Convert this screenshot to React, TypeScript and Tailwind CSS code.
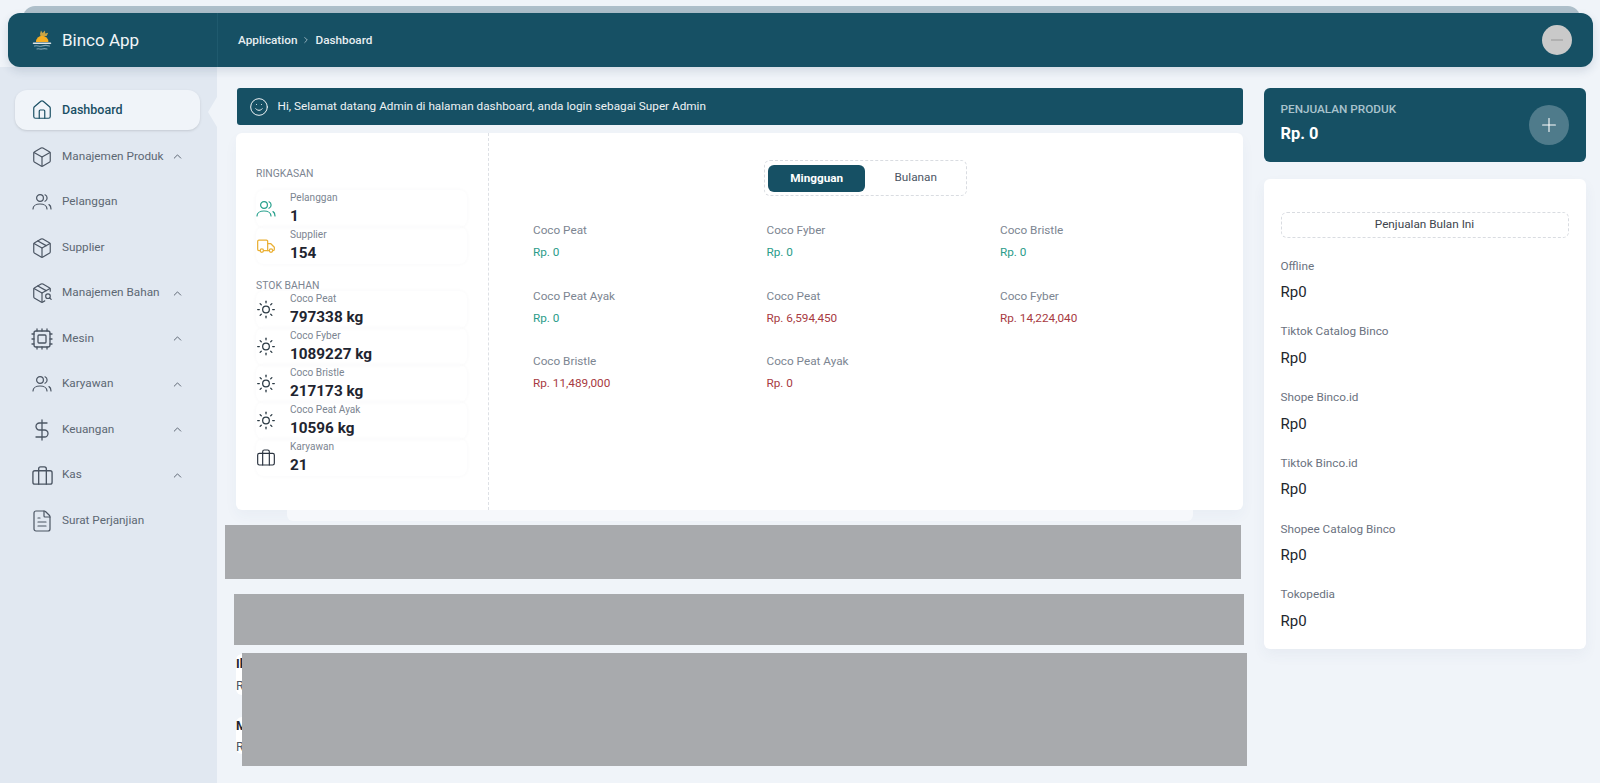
import { Box, ChevronRight, ChevronUp, Cpu, DollarSign, FileText, House, Package, PackageSearch, Plus, Smile, Sun } from 'lucide-react';
import type { ReactNode } from 'react';

function PeopleIcon({ className }: { className?: string }) {
  return (
    <svg className={className} viewBox="0 0 20 20" fill="none" stroke="currentColor" strokeWidth={1.2} strokeLinecap="round" strokeLinejoin="round">
      <circle cx="8" cy="6" r="3.4" />
      <path d="M1 17c0-3 3-5 7-5s7 2 7 5" />
      <path d="M13 2.8c1.5.6 2.1 2 2.1 3.3s-.6 2.6-2.1 3.2" />
      <path d="M17 12.6c1.3.7 2 2.1 2 4.4" />
    </svg>
  );
}

function CaseIcon({ className }: { className?: string }) {
  return (
    <svg className={className} viewBox="0 0 24 24" fill="none" stroke="currentColor" strokeWidth={1.4} strokeLinecap="round" strokeLinejoin="round">
      <rect x="2" y="7" width="20" height="14" rx="2" />
      <path d="M16 21V5a2 2 0 0 0-2-2h-4a2 2 0 0 0-2 2v16" />
    </svg>
  );
}

function TruckIcon({ className }: { className?: string }) {
  return (
    <svg className={className} viewBox="0 0 24 24" fill="none" stroke="currentColor" strokeWidth={1.5} strokeLinecap="round" strokeLinejoin="round">
      <path d="M5 17.5H3.5A1.5 1.5 0 0 1 2 16V6.5A1.5 1.5 0 0 1 3.5 5h9A1.5 1.5 0 0 1 14 6.5v11H9" />
      <path d="M14 9h3.5l4.5 4.5v2.5a1.5 1.5 0 0 1-1.5 1.5H20M16 17.5h-2" />
      <circle cx="7" cy="17.5" r="2" />
      <circle cx="18" cy="17.5" r="2" />
    </svg>
  );
}

function Logo() {
  return (
    <svg className="h-[22px] w-[22px]" viewBox="0 0 22 22" fill="none">
      <path d="M9 5l1-3.5 1.6 2.4L14 1.5l.2 3 3-.8-1.6 3.4H9.5z" fill="#c9a445" />
      <path d="M5 13a6.2 6.2 0 0 1 12.4 0z" fill="#f6ae22" />
      <path d="M2.5 14.2h17" stroke="#dfe6e9" strokeWidth="1.5" strokeLinecap="round" />
      <path d="M3.5 17c2.5-1 5 .8 7.5 0s5-.8 7.5 0M6 20c1.8-.7 3.3.5 5 0s3.2-.5 5 0" stroke="#7fa3b3" strokeWidth="1.1" strokeLinecap="round" />
    </svg>
  );
}

const navItems: { label: string; icon: ReactNode; sub?: boolean }[] = [
  { label: 'Manajemen Produk', icon: <Box className="h-[22px] w-[22px]" strokeWidth={1.3} />, sub: true },
  { label: 'Pelanggan', icon: <PeopleIcon className="h-[20px] w-[20px]" /> },
  { label: 'Supplier', icon: <Package className="h-[22px] w-[22px]" strokeWidth={1.3} /> },
  { label: 'Manajemen Bahan', icon: <PackageSearch className="h-[22px] w-[22px]" strokeWidth={1.3} />, sub: true },
  { label: 'Mesin', icon: <Cpu className="h-[24px] w-[24px]" strokeWidth={1.3} />, sub: true },
  { label: 'Karyawan', icon: <PeopleIcon className="h-[20px] w-[20px]" />, sub: true },
  { label: 'Keuangan', icon: <DollarSign className="h-[24px] w-[24px]" strokeWidth={1.3} />, sub: true },
  { label: 'Kas', icon: <CaseIcon className="h-[23px] w-[23px]" />, sub: true },
  { label: 'Surat Perjanjian', icon: <FileText className="h-[24px] w-[24px]" strokeWidth={1.2} /> },
];

function Sidebar() {
  return (
    <aside className="relative w-[217px] shrink-0 bg-[#e1e8f1] pl-[15px] pr-[17px] pt-[23px] text-[#5c6773]">
      <div className="flex h-10 items-center rounded-xl bg-[#f0f4f9] pl-[16px] text-[#1a4f64] shadow-sm">
        <House className="h-[22px] w-[22px] shrink-0" strokeWidth={1.3} />
        <span className="ml-[9px] pt-px text-[12.5px] font-medium">Dashboard</span>
      </div>
      <div className="absolute right-0 top-[30px] h-[30px] w-[9px] bg-[#f0f4f9] [clip-path:polygon(100%_0,0_50%,100%_100%)]" />
      <nav className="mt-[4px]">
        {navItems.map((item) => (
          <div key={item.label} className="flex h-[45.5px] items-center">
            <span className="flex w-[47px] shrink-0 justify-center pl-[7px] text-[#4b5563]">{item.icon}</span>
            <span className="text-[11.76px] whitespace-nowrap">{item.label}</span>
            {item.sub && <ChevronUp className="ml-auto mr-[16px] h-[13px] w-[13px] text-[#4b5563]" strokeWidth={1.6} />}
          </div>
        ))}
      </nav>
    </aside>
  );
}

function StatRow({ icon, label, value }: { icon: ReactNode; label: string; value: string }) {
  return (
    <div className="flex h-[37px] items-center rounded-lg shadow-[0_0_4px_rgba(30,50,80,0.035)]">
      <span className="flex w-[20px] shrink-0 justify-center">{icon}</span>
      <div className="ml-[14px]">
        <div className="text-[10.1px] leading-[13px] text-[#7c8591]">{label}</div>
        <div className="mt-[2px] text-[15.3px] font-bold leading-[21px] text-[#1f2530]">{value}</div>
      </div>
    </div>
  );
}

const sunIcon = <Sun className="h-[21px] w-[21px] text-[#2b3a44]" strokeWidth={1.5} />;

const sales = [
  { label: 'Coco Peat', value: 'Rp. 0', tone: 'text-[#2a9c8a]' },
  { label: 'Coco Fyber', value: 'Rp. 0', tone: 'text-[#2a9c8a]' },
  { label: 'Coco Bristle', value: 'Rp. 0', tone: 'text-[#2a9c8a]' },
  { label: 'Coco Peat Ayak', value: 'Rp. 0', tone: 'text-[#2a9c8a]' },
  { label: 'Coco Peat', value: 'Rp. 6,594,450', tone: 'text-[#a83a42]' },
  { label: 'Coco Fyber', value: 'Rp. 14,224,040', tone: 'text-[#a83a42]' },
  { label: 'Coco Bristle', value: 'Rp. 11,489,000', tone: 'text-[#a83a42]' },
  { label: 'Coco Peat Ayak', value: 'Rp. 0', tone: 'text-[#a83a42]' },
];

const channels = ['Offline', 'Tiktok Catalog Binco', 'Shope Binco.id', 'Tiktok Binco.id', 'Shopee Catalog Binco', 'Tokopedia'];

export default function App() {
  return (
    <div className="relative h-[783px] overflow-hidden bg-[#f0f4f9] font-['Roboto',sans-serif]">
      <div className="absolute left-[23px] right-[20px] top-[6px] h-[14px] rounded-t-xl bg-[#aebfca]" />
      <div className="pl-2 pr-[7px] pt-[13px]">
        <header className="relative z-10 flex h-[54px] items-center rounded-xl bg-[#165064] text-white shadow-[0_4px_10px_rgba(30,60,90,0.14)]">
          <div className="flex h-full w-[210px] shrink-0 items-center border-r border-[#1f5a6e] pl-[23px]">
            <Logo />
            <span className="ml-[9px] pt-px text-[17px] text-[#f1f5f7]">Binco App</span>
          </div>
          <div className="ml-[20px] flex items-center pt-px text-[11.76px] font-medium text-[#e6eef1]">
            <span>Application</span>
            <ChevronRight className="mx-[4px] h-[10px] w-[10px] text-[#a9c1cb]" />
            <span>Dashboard</span>
          </div>
          <div className="ml-auto mr-[21px] flex h-[30px] w-[30px] items-center justify-center rounded-full bg-[#c9c9c9]">
            <span className="h-[2px] w-[12px] bg-[#b0b0b0]" />
          </div>
        </header>
      </div>

      <div className="flex h-[716px]">
        <Sidebar />

        <main className="flex min-w-0 flex-1 pl-[20px] pr-[14.5px] pt-[21px]">
          <div className="w-[1005.5px] shrink-0">
            <div className="flex h-[37px] items-center rounded-[3px] bg-[#165064] pl-[12px] text-[11.76px] text-[#eef3f5]">
              <Smile className="h-[20px] w-[20px]" strokeWidth={1.2} />
              <span className="ml-[8.5px] pt-px">Hi, Selamat datang Admin di halaman dashboard, anda login sebagai Super Admin</span>
            </div>

            <section className="-ml-px mt-2 flex h-[377px] rounded-md bg-white shadow-[0_6px_14px_rgba(60,80,120,0.04)]">
              <div className="w-[253px] shrink-0 border-r border-dashed border-[#dde0e5] pl-[20px] pr-[21px] pt-[34px]">
                <div className="text-[10.4px] leading-[13px] text-[#7c8591]">RINGKASAN</div>
                <div className="mt-[10px]">
                  <StatRow icon={<PeopleIcon className="h-[20px] w-[20px] text-[#26a08c]" />} label="Pelanggan" value="1" />
                  <StatRow icon={<TruckIcon className="h-[22px] w-[22px] text-[#eab035]" />} label="Supplier" value="154" />
                </div>
                <div className="mt-[15px] text-[10.4px] leading-[13px] text-[#7c8591]">STOK BAHAN</div>
                <div className="-mt-px">
                  <StatRow icon={sunIcon} label="Coco Peat" value="797338 kg" />
                  <StatRow icon={sunIcon} label="Coco Fyber" value="1089227 kg" />
                  <StatRow icon={sunIcon} label="Coco Bristle" value="217173 kg" />
                  <StatRow icon={sunIcon} label="Coco Peat Ayak" value="10596 kg" />
                  <StatRow icon={<CaseIcon className="h-[21px] w-[21px] text-[#2b3440]" />} label="Karyawan" value="21" />
                </div>
              </div>

              <div className="min-w-0 flex-1 pt-[27px]">
                <div className="mx-auto flex h-[36px] w-[203px] items-center rounded-md border border-dashed border-[#d9dce1] pl-[3px]">
                  <div className="flex h-[27px] w-[97px] items-center justify-center rounded-md bg-[#165064] pt-px text-[11.76px] font-bold text-white">Mingguan</div>
                  <div className="flex-1 text-center text-[11.76px] text-[#4b5563]">Bulanan</div>
                </div>
                <div className="mt-[26px] grid grid-cols-[repeat(3,233.5px)] gap-y-[27.6px] pl-[44px]">
                  {sales.map((s, i) => (
                    <div key={i} className="h-[38px]">
                      <div className="text-[11.76px] leading-[17px] text-[#7c8591]">{s.label}</div>
                      <div className={`mt-[5px] text-[11.76px] leading-[16px] ${s.tone}`}>{s.value}</div>
                    </div>
                  ))}
                </div>
              </div>
            </section>
            <div className="mx-[50px] h-[11px] rounded-b-md bg-[#f6f8fb]" />

            <section className="-ml-px mt-[133px] w-[30px] text-[12.5px]">
              <div className="h-[41px] rounded-l-md bg-white pt-px">
                <div className="font-bold leading-[17px] text-[#1f2530]">Ik</div>
                <div className="mt-[5px] leading-[17px] text-[#4b5563]">Rp</div>
              </div>
              <div className="mt-[21.5px] h-[37px] rounded-l-md bg-white">
                <div className="font-bold leading-[17px] text-[#1f2530]">Mu</div>
                <div className="mt-[4px] leading-[17px] text-[#4b5563]">Rp</div>
              </div>
            </section>
          </div>

          <div className="ml-[21px] min-w-0 flex-1">
            <div className="flex h-[74px] items-center justify-between rounded-md bg-[#165064] pl-[17px] pr-[17px]">
              <div className="pb-[3px]">
                <div className="text-[11.76px] font-medium text-[#a9c3cd]">PENJUALAN PRODUK</div>
                <div className="mt-[3px] text-[16.4px] font-bold text-white">Rp. 0</div>
              </div>
              <div className="flex h-10 w-10 items-center justify-center rounded-full bg-[#4f7b8b]">
                <Plus className="h-[22px] w-[22px] text-white" strokeWidth={1.2} />
              </div>
            </div>

            <div className="mt-[17px] h-[470px] rounded-md bg-white px-[17px] pt-[33px] shadow-[0_6px_14px_rgba(60,80,120,0.05)]">
              <div className="flex h-[26px] items-center justify-center rounded-md border border-dashed border-[#d9dce1] text-[11.76px] text-[#3d444d]">Penjualan Bulan Ini</div>
              <div className="mt-[19.5px]">
                {channels.map((c) => (
                  <div key={c} className="h-[65.75px]">
                    <div className="text-[11.76px] leading-[17px] text-[#6b7280]">{c}</div>
                    <div className="mt-[7.5px] text-[15px] leading-[20px] text-[#23272e]">Rp0</div>
                  </div>
                ))}
              </div>
            </div>
          </div>
        </main>
      </div>

      {/* grey blocks that cover the lower rows in the picture */}
      <div className="absolute left-[225px] top-[525px] h-[54px] w-[1016px] bg-[#a8aaad]" />
      <div className="absolute left-[234px] top-[594px] h-[51px] w-[1010px] bg-[#a8aaad]" />
      <div className="absolute left-[242px] top-[653px] h-[113px] w-[1005px] bg-[#a8aaad]" />
    </div>
  );
}
